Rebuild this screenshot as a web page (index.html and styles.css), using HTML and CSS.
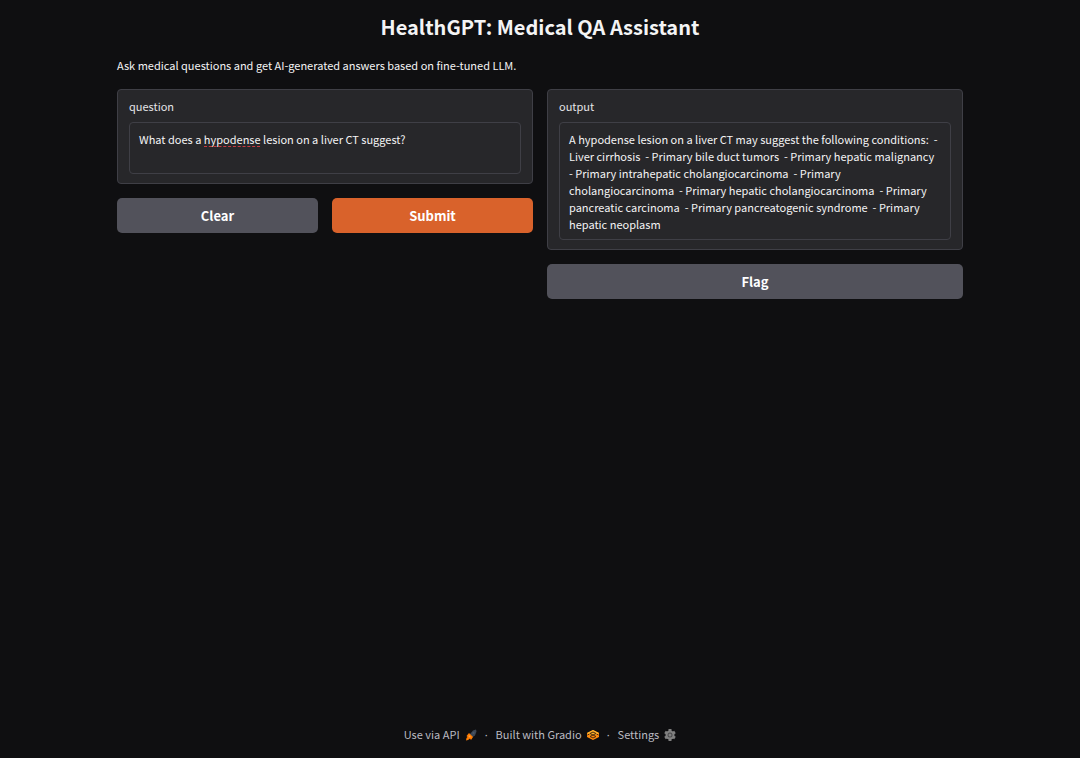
FILE: index.html
```
<!DOCTYPE html>
<html lang="en">
<head>
    <meta charset="UTF-8">
    <meta name="viewport" content="width=device-width, initial-scale=1.0">
    <title>HealthGPT: Medical QA Assistant</title>
    <link rel="stylesheet" href="styles.css">
</head>
<body>
    <main class="container">
        <h1>HealthGPT: Medical QA Assistant</h1>
        <p class="description">Ask medical questions and get AI-generated answers based on fine-tuned LLM.</p>

        <div class="columns">
            <div class="column">
                <div class="block">
                    <label for="question">question</label>
                    <div class="field">
                        <textarea id="question" rows="2" spellcheck="false">What does a hypodense lesion on a liver CT suggest?</textarea>
                        <span class="spelling-mark"></span>
                    </div>
                </div>
                <div class="buttons">
                    <button type="button">Clear</button>
                    <button type="button" class="primary">Submit</button>
                </div>
            </div>

            <div class="column">
                <div class="block">
                    <label for="output">output</label>
                    <div class="field">
                        <textarea id="output" rows="6" spellcheck="false" readonly>A hypodense lesion on a liver CT may suggest the following conditions:  - Liver cirrhosis  - Primary bile duct tumors  - Primary hepatic malignancy  - Primary intrahepatic cholangiocarcinoma  - Primary cholangiocarcinoma  - Primary hepatic cholangiocarcinoma  - Primary pancreatic carcinoma  - Primary pancreatogenic syndrome  - Primary hepatic neoplasm</textarea>
                    </div>
                </div>
                <div class="buttons">
                    <button type="button">Flag</button>
                </div>
            </div>
        </div>
    </main>

    <footer>
        <a href="#api">Use via API
            <svg class="icon" viewBox="0 0 24 24" aria-hidden="true">
                <path fill="#3b4654" d="M11 9 16 3l6-2 1 4-3 8-6 4-6-6z"/>
                <circle cx="17" cy="8" r="2" fill="#4a5768"/>
                <path fill="#ff7c00" d="M8 8 16 16l-4 6-2-3-4 3-4 1 1-5 2-2-2-2z"/>
                <path fill="#ffa047" d="M8 12l4 4-3 1-2-2z"/>
            </svg>
        </a>
        <span class="divider">·</span>
        <a href="#gradio">Built with Gradio
            <svg class="icon" viewBox="0 0 24 24" aria-hidden="true">
                <path fill="#ff8a0c" d="M12 2 24 8v8l-12 6L0 16V8z"/>
                <path fill="#ffb52e" d="M12 2 24 8l-12 6L0 8z"/>
                <path fill="none" stroke="#4a2a0c" stroke-width="2" d="M6 9l6-3 6 3-6 3zM1 12l4-2m18 2-4-2M6 15l6-3 6 3-6 3z"/>
            </svg>
        </a>
        <span class="divider">·</span>
        <a href="#settings">Settings
            <svg class="icon" viewBox="0 0 24 24" aria-hidden="true">
                <g stroke="#818181" stroke-width="6">
                    <path d="M12 0v24M2 6l20 12M2 18 22 6"/>
                </g>
                <circle cx="12" cy="12" r="9" fill="#818181"/>
                <circle cx="12" cy="12" r="5" fill="#4a4a4c"/>
                <circle cx="12" cy="12" r="3" fill="#818181"/>
            </svg>
        </a>
    </footer>
</body>
</html>
```

FILE: styles.css
```
* {
    box-sizing: border-box;
}

body {
    display: flex;
    flex-direction: column;
    min-height: 100vh;
    margin: 0;
    background: #0f0f11;
    color: #f4f4f5;
    font-family: "Noto Sans CJK SC", "Source Sans Pro", sans-serif;
    font-size: 11px;
    line-height: 17px;
}

.container {
    width: 100%;
    max-width: 876px;
    margin: 0 auto;
    padding: 13px 15px;
    flex: 1;
}

h1 {
    margin: 0 0 17px;
    font-size: 20px;
    font-weight: 600;
    line-height: 27px;
    text-align: center;
}

.description {
    margin: 0 0 15px;
}

.columns {
    display: grid;
    grid-template-columns: 1fr 1fr;
    align-items: start;
    gap: 14px;
}

.column {
    display: flex;
    flex-direction: column;
    gap: 14px;
}

.block {
    padding: 8px 11px 9px;
    background: #27272a;
    border: 1px solid #3f3f46;
    border-radius: 4px;
}

label {
    display: block;
    margin-bottom: 7px;
    color: #e4e4e7;
}

.field {
    position: relative;
}

textarea {
    display: block;
    width: 100%;
    min-height: 52px;
    padding: 8px 9px 6px;
    background: transparent;
    border: 1px solid #3f3f46;
    border-radius: 4px;
    color: inherit;
    font: inherit;
    resize: none;
    overflow: hidden;
}

.spelling-mark {
    position: absolute;
    top: 24px;
    left: 75px;
    width: 56px;
    border-bottom: 1px dashed #c73a40;
}

.buttons {
    display: flex;
    gap: 14px;
}

button {
    flex: 1;
    padding: 7px;
    background: #52525b;
    border: none;
    border-radius: 5px;
    color: #fff;
    font: inherit;
    font-size: 13px;
    font-weight: 600;
    line-height: 21px;
    cursor: pointer;
}

.primary {
    background: #d9622b;
}

footer {
    display: flex;
    justify-content: center;
    gap: 8px;
    padding: 15px;
    color: #bbbbc2;
}

footer a {
    display: flex;
    align-items: center;
    gap: 5px;
    color: inherit;
    text-decoration: none;
}

.divider {
    font-family: "Noto Sans", sans-serif;
}

.icon {
    width: 12px;
    height: 12px;
}
```
